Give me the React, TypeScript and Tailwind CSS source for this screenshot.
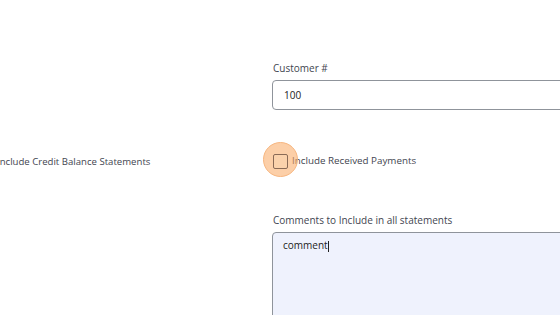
export default function App() {
  return (
    <div className="w-[560px] h-[315px] overflow-hidden bg-white text-[#3f4550] font-['Open_Sans',sans-serif]">
      <div className="flex pt-[62px]">
        {/* Left column */}
        <div className="w-[275px] shrink-0 -ml-[3px] pt-[92px]">
          <div className="h-[17px] flex items-center text-[9.6px]">Include Credit Balance Statements</div>
        </div>

        {/* Right column */}
        <div className="flex-1 flex flex-col">
          <label className="text-[10px] pl-[1px] leading-[13px]">Customer #</label>
          <div className="mt-[5px] h-[30px] w-[300px] border border-[#8f949b] rounded-[4px] flex items-center px-[11px] text-[10px] text-[#222]">
            100
          </div>

          <div className="mt-[43px] h-[17px] flex items-center gap-[4px] pl-[1px]">
            <span className="order-2 text-[9.8px] ml-[0px]">Include Received Payments</span>
            <div className="order-1 relative z-10 w-[15px] h-[15px]">
              <div className="absolute left-[-10px] top-[-12px] w-[35px] h-[35px] rounded-full bg-[#f9a860]/55 border border-[#f7b680]" />
              <div className="absolute inset-0 border border-[#8a6a56] rounded-[2px] bg-[#fbd2ac]" />
            </div>
          </div>

          <label className="mt-[44px] text-[10px] pl-[1px] leading-[13px]">Comments to Include in all statements</label>
          <div className="mt-[5px] h-[100px] w-[300px] border border-[#8f949b] rounded-[4px] bg-[#eff2fd] px-[10px] pt-[5px] text-[10px] text-[#222]">
            comment<span className="inline-block w-[1px] h-[11px] bg-[#222] align-middle" />
          </div>
        </div>
      </div>
    </div>
  );
}
